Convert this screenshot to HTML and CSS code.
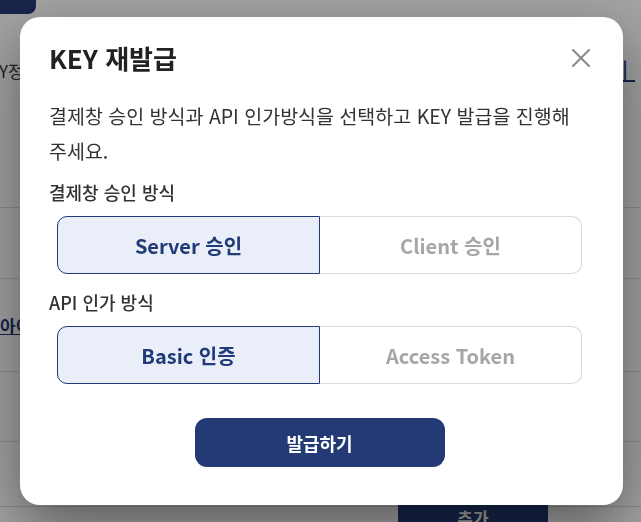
FILE: index.html
```html
<!DOCTYPE html>
<html lang="ko">
<head>
<meta charset="utf-8">
<title>KEY 재발급</title>
<link rel="stylesheet" href="styles.css">
</head>
<body>
<div class="page">
  <div class="tab"></div>
  <div class="row row-top">
    <span class="cut-text">Y정</span>
    <a class="link link-right" href="#">ㅣ</a>
  </div>
  <div class="row row-b"></div>
  <div class="row row-c"><a class="link" href="#">아이</a></div>
  <div class="row row-d"></div>
  <div class="row row-e"></div>
  <div class="row row-f"><span class="add-btn">추가</span></div>
</div>

<div class="overlay">
  <div class="modal" role="dialog" aria-labelledby="mtitle">
    <div class="modal-head">
      <h2 id="mtitle" class="modal-title">KEY 재발급</h2>
      <button class="close" aria-label="닫기">
        <svg width="18" height="18" viewBox="0 0 18 18"><path d="M1 1 L17 17 M17 1 L1 17" stroke="#8a8a8a" stroke-width="2" fill="none" stroke-linecap="square"/></svg>
      </button>
    </div>
    <p class="desc">결제창 승인 방식과 API 인가방식을 선택하고 KEY 발급을 진행해 주세요.</p>
    <div class="label label-first">결제창 승인 방식</div>
    <div class="seg">
      <button class="seg-btn is-on">Server 승인</button>
      <button class="seg-btn">Client 승인</button>
    </div>
    <div class="label label-second">API 인가 방식</div>
    <div class="seg">
      <button class="seg-btn is-on">Basic 인증</button>
      <button class="seg-btn">Access Token</button>
    </div>
    <div class="actions">
      <button class="primary">발급하기</button>
    </div>
  </div>
</div>
</body>
</html>
```

FILE: styles.css
```css
* { box-sizing: border-box; }
html, body { margin: 0; padding: 0; }
body {
  width: 641px;
  height: 522px;
  overflow: hidden;
  font-family: "Noto Sans CJK KR", "Noto Sans", sans-serif;
  background: #ffffff;
  color: #333;
}
.page { width: 641px; height: 522px; }
.tab {
  width: 36px;
  height: 14px;
  background: #233a74;
  border-bottom-right-radius: 8px;
}
.row { border-bottom: 1px solid #dcdcdc; display: flex; align-items: center; justify-content: space-between; }
.row-top { height: 194px; align-items: flex-start; padding-top: 44px; }
.row-b { height: 71px; }
.row-c { height: 93px; }
.row-d { height: 70px; }
.row-e { height: 65px; }
.row-f { height: 40px; border-bottom: none; align-items: flex-start; }
.cut-text { font-size: 17px; color: #333; margin-left: -1px; }
.link { color: #233a74; text-decoration: underline; font-size: 17px; font-weight: 700; }
.link-right { font-size: 22px; font-weight: 400; margin-right: 6px; margin-top: -6px; }
.row-c .link { margin-left: 0; }
.add-btn {
  margin-left: 398px;
  margin-top: -2px;
  width: 150px;
  height: 40px;
  background: #233a74;
  color: #fff;
  font-size: 17px;
  font-weight: 700;
  display: flex;
  justify-content: center;
  padding-top: 0;
}

.overlay {
  position: fixed;
  inset: 0;
  background: rgba(0, 0, 0, 0.36);
}
.modal {
  position: absolute;
  left: 20px;
  top: 17px;
  width: 603px;
  height: 488px;
  background: #fff;
  border-radius: 20px;
  padding: 25px 33px 0 29px;
  display: flex;
  flex-direction: column;
  box-shadow: 0 22px 60px rgba(0, 0, 0, 0.45);
}
.modal-head {
  display: flex;
  justify-content: space-between;
  align-items: center;
  height: 32px;
}
.modal-title {
  margin: 0;
  font-size: 26px;
  line-height: 32px;
  font-weight: 700;
  color: #222;
}
.close {
  border: 0;
  background: none;
  padding: 0;
  width: 18px;
  height: 18px;
  display: block;
}
.close svg { display: block; }
.desc {
  margin: 24px 0 0;
  font-size: 19.5px;
  line-height: 35px;
  color: #333;
}
.label {
  font-size: 18px;
  line-height: 26px;
  font-weight: 500;
  color: #333;
}
.label-first { margin-top: 11px; }
.label-second { margin-top: 15px; }
.seg {
  margin: 11px 8px 0;
  display: flex;
  height: 58px;
}
.seg-btn {
  flex: 1;
  font-family: inherit;
  font-size: 20px;
  font-weight: 700;
  color: #a6a6a6;
  background: #fff;
  border: 1px solid #d9d9d9;
  padding: 0;
}
.seg-btn:first-child { border-radius: 10px 0 0 10px; }
.seg-btn:last-child { border-radius: 0 10px 10px 0; border-left: none; }
.seg-btn.is-on {
  background: #e9eef8;
  border-color: #223a78;
  color: #213b78;
}
.actions {
  display: flex;
  justify-content: center;
  margin-top: 34px;
}
.primary {
  width: 250px;
  height: 49px;
  border: 0;
  border-radius: 12px;
  background: #233a74;
  color: #fff;
  font-family: inherit;
  font-size: 18px;
  font-weight: 700;
}
```
